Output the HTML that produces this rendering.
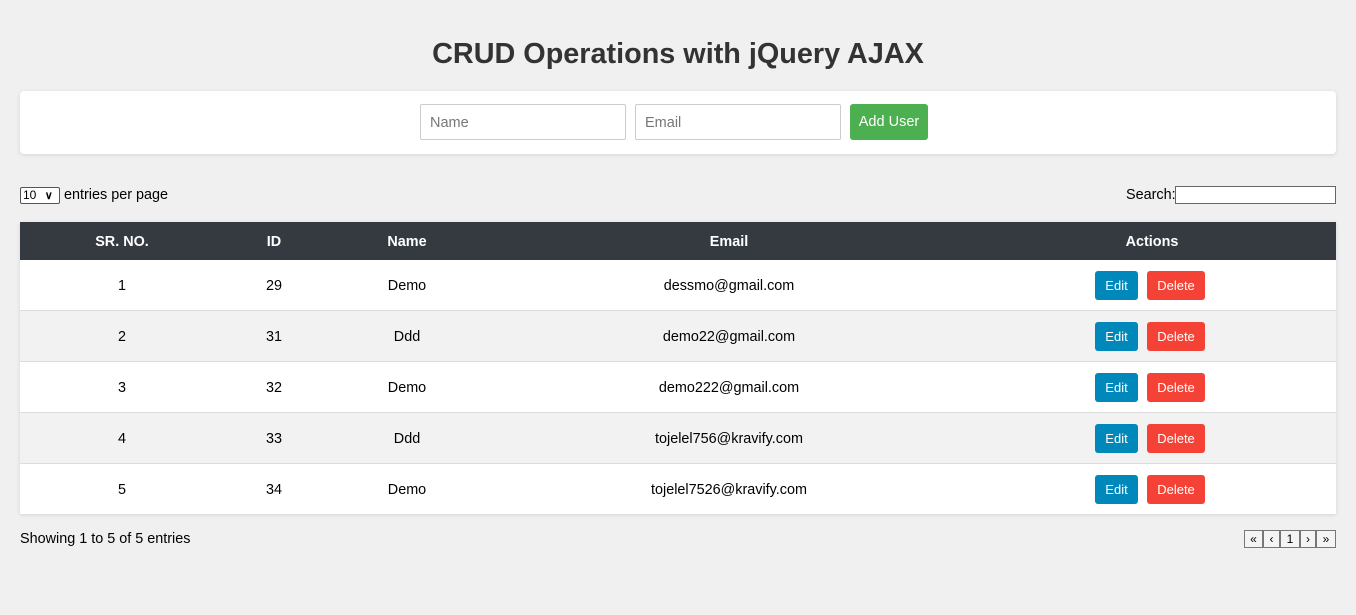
<!DOCTYPE html>
<html><head><style>
body{margin:0;background:#f0f0f0;font-family:"Liberation Sans",sans-serif;width:1356px;height:615px;position:relative;overflow:hidden;color:#000}
h1{position:absolute;top:38px;left:0;width:1356px;text-align:center;margin:0;font-size:28.8px;font-weight:bold;color:#333}
.card{position:absolute;left:20px;top:91px;width:1316px;height:63px;background:#fff;border-radius:4px;box-shadow:0 1px 4px rgba(0,0,0,.12)}
.in{position:absolute;top:104px;border:1px solid #ccc;background:#fff;border-radius:2px;font-size:14.5px;color:#777;line-height:36px;padding-left:9px;box-sizing:border-box;width:206px;height:36px}
.add{position:absolute;left:850px;top:104px;width:78px;height:36px;background:#4caf50;color:#fff;font-size:14.5px;line-height:36px;text-align:center;border-radius:3px}
.sel{position:absolute;left:20px;top:187px;width:36px;height:15px;border:1px solid #555;border-radius:2px;font-size:12px;line-height:15px;padding-left:2px;box-sizing:content-box;background:#fff}
.t15{position:absolute;font-size:14.4px}
.search{position:absolute;left:1175px;top:186px;width:159px;height:16px;border:1px solid #666;background:#fff}
table{position:absolute;left:20px;top:222px;width:1316px;border-collapse:collapse;font-size:14.4px;box-shadow:0 1px 4px rgba(0,0,0,.12)}
th{background:#343a40;color:#fff;height:37px;padding:1px 0 0;font-weight:bold}
td{height:48px;padding:2px 0 0;text-align:center;border-bottom:1px solid #ddd;background:#fff}
tbody tr:nth-child(even) td{background:#f2f2f2}
.b{display:inline-block;height:29px;line-height:29px;font-size:13px;color:#fff;border-radius:3px;vertical-align:middle;position:relative;top:-1px}
.e{background:#0088bb;width:43px}.d{background:#f44336;width:58px;margin-left:9px;margin-right:4px}
.pg{position:absolute;top:530px;height:16px;border:1px solid #777;font-size:12px;line-height:16px;text-align:center;background:#f4f4f4}
</style></head><body>
<h1>CRUD Operations with jQuery AJAX</h1>
<div class="card"></div>
<div class="in" style="left:420px">Name</div>
<div class="in" style="left:635px">Email</div>
<div class="add">Add User</div>
<div class="sel">10 <span style="font-size:11px;margin-left:5px;font-weight:bold">&#x2228;</span></div>
<div class="t15" style="left:64px;top:187px">entries per page</div>
<div class="t15" style="left:1126px;top:187px">Search:</div>
<div class="search"></div>
<table>
<thead><tr><th style="width:204px">SR. NO.</th><th style="width:100px">ID</th><th style="width:166px">Name</th><th style="width:478px">Email</th><th>Actions</th></tr></thead>
<tbody>
<tr><td>1</td><td>29</td><td>Demo</td><td>dessmo@gmail.com</td><td><span class="b e">Edit</span><span class="b d">Delete</span></td></tr>
<tr><td>2</td><td>31</td><td>Ddd</td><td>demo22@gmail.com</td><td><span class="b e">Edit</span><span class="b d">Delete</span></td></tr>
<tr><td>3</td><td>32</td><td>Demo</td><td>demo222@gmail.com</td><td><span class="b e">Edit</span><span class="b d">Delete</span></td></tr>
<tr><td>4</td><td>33</td><td>Ddd</td><td>tojelel756@kravify.com</td><td><span class="b e">Edit</span><span class="b d">Delete</span></td></tr>
<tr><td style="border:0">5</td><td style="border:0">34</td><td style="border:0">Demo</td><td style="border:0">tojelel7526@kravify.com</td><td style="border:0"><span class="b e">Edit</span><span class="b d">Delete</span></td></tr>
</tbody>
</table>
<div class="t15" style="left:20px;top:531px">Showing 1 to 5 of 5 entries</div>
<div class="pg" style="left:1244px;width:17px">«</div>
<div class="pg" style="left:1263px;width:15px">‹</div>
<div class="pg" style="left:1280px;width:18px">1</div>
<div class="pg" style="left:1300px;width:14px">›</div>
<div class="pg" style="left:1316px;width:18px">»</div>
</body></html>
